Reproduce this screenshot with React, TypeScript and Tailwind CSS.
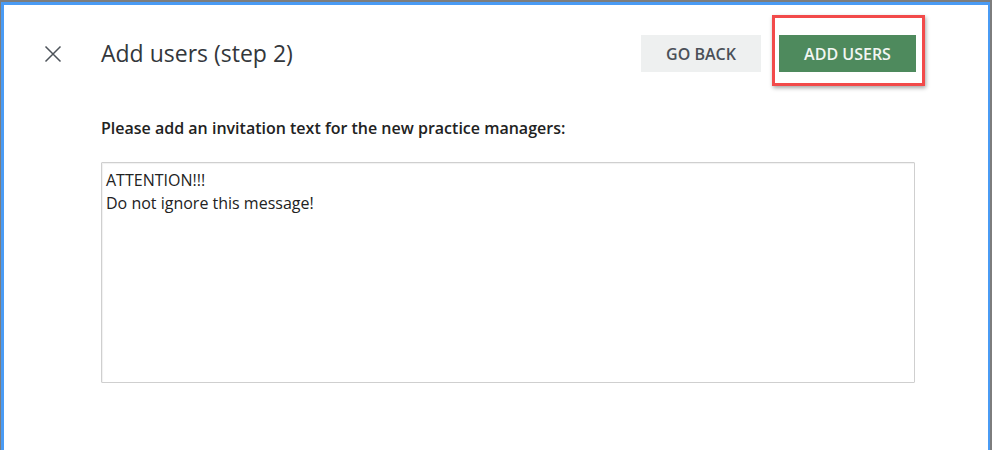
const FONT = { fontFamily: '"Open Sans", "Noto Sans", sans-serif' };

export default function App() {
  return (
    <div
      className="h-[450px] w-[992px] overflow-hidden bg-[#7d7d7d] pl-[1px] pr-[2px] pt-[2px]"
      style={FONT}
    >
      <div className="flex h-full flex-col border-l-[3px] border-r-[2px] border-t-[3px] border-[#4a9bf4] bg-white">
        {/* header */}
        <div className="mt-[30px] flex h-[37px] items-center pl-[40px] pr-[72px]">
          <button className="flex h-[18px] w-[18px] shrink-0 items-center justify-center text-[#4d535a]">
            <svg viewBox="0 0 18 18" className="h-[18px] w-[18px]" fill="none">
              <path d="M1.5 1.5l15 15M16.5 1.5l-15 15" stroke="currentColor" strokeWidth="1.5" />
            </svg>
          </button>
          <h1 className="ml-[39px] text-[23px] font-normal leading-none text-[#33373b]">
            Add users (step 2)
          </h1>
          <div className="ml-auto flex items-center gap-[18px]">
            <button className="h-[37px] w-[120px] bg-[#eef0f0] text-[16px] font-semibold text-[#4a5058]">
              GO BACK
            </button>
            <div className="relative">
              <button className="h-[37px] w-[137px] bg-[#4e8a5d] text-[16px] font-semibold text-[#f2f6f3]">
                ADD USERS
              </button>
              <div className="pointer-events-none absolute -bottom-[14px] -left-[7px] -right-[9px] -top-[20px] border-[3px] border-[#f24a4a] shadow-[1px_2px_4px_rgba(0,0,0,0.35)]" />
            </div>
          </div>
        </div>

        {/* body */}
        <div className="pl-[97px] pr-[73px]">
          <p className="mt-[45px] text-[16px] font-semibold leading-[22px] text-[#222]">
            Please add an invitation text for the new practice managers:
          </p>
          <textarea
            className="mt-[23px] block h-[221px] w-full resize-none rounded-[1px] border border-[#cfcfcf] px-[4px] pb-[6px] pt-[6px] text-[16px] leading-[23px] text-[#222] shadow-[inset_1px_1px_1px_rgba(0,0,0,0.06)] outline-none"
            style={FONT}
            defaultValue={"ATTENTION!!!\nDo not ignore this message!"}
          />
        </div>
      </div>
    </div>
  );
}
